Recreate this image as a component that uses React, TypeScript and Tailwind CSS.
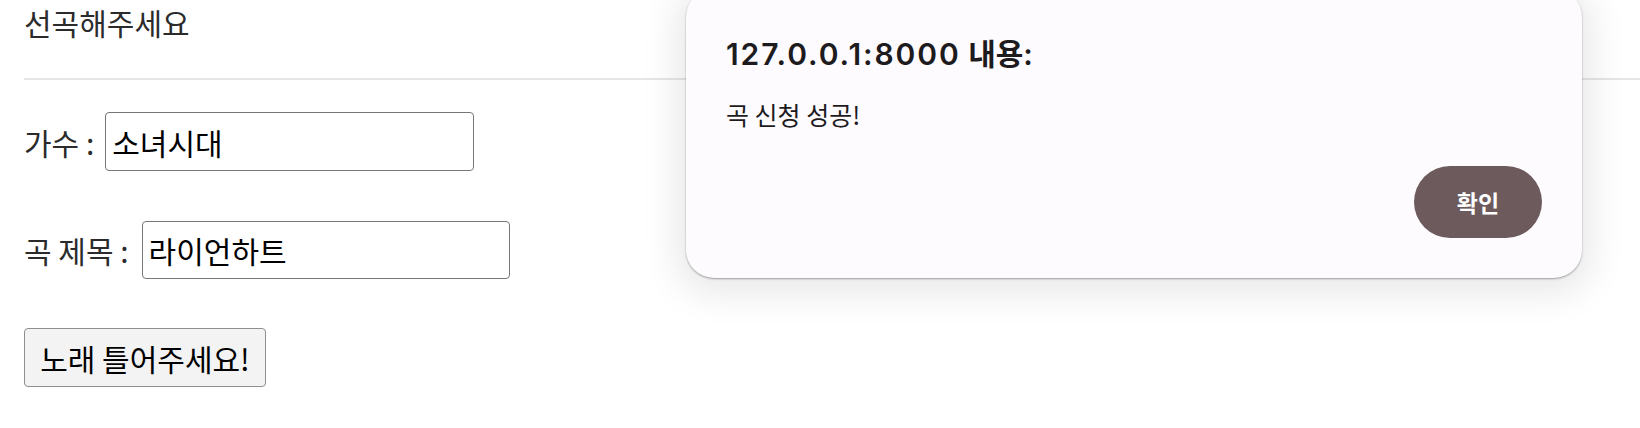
import React from "react";

export default function App() {
  return (
    <div className="relative h-[428px] w-[1640px] overflow-hidden bg-white font-['Noto_Sans_CJK_KR',sans-serif] text-[30px] text-[#2b2b2b]">
      <div className="pl-6">
        <div className="h-[78px] pt-[2px] leading-[40px]">선곡해주세요</div>
        <div className="h-[2px] bg-[#e6e6e6]" />
        <div className="mt-[32px] flex h-[59px] items-center">
          <span className="leading-[40px]">가수 :</span>
          <input
            readOnly
            value="소녀시대"
            className="ml-[11px] h-[59px] w-[369px] rounded-[4px] border-[1.5px] border-[#767676] bg-white px-[6px] font-['Noto_Sans_CJK_KR',sans-serif] text-[30px] text-black outline-none"
          />
        </div>
        <div className="mt-[50px] flex h-[58px] items-center">
          <span className="leading-[40px]">곡 제목 :</span>
          <input
            readOnly
            value="라이언하트"
            className="ml-[13px] h-[58px] w-[368px] rounded-[4px] border-[1.5px] border-[#767676] bg-white px-[6px] font-['Noto_Sans_CJK_KR',sans-serif] text-[30px] text-black outline-none"
          />
        </div>
        <div className="mt-[49px]">
          <button className="flex h-[59px] w-[242px] items-center justify-center rounded-[4px] border-[1.5px] border-[#8f8f8f] bg-[#f3f3f3] font-['Noto_Sans_CJK_KR',sans-serif] text-[30px] leading-[40px] text-black">
            노래 틀어주세요!
          </button>
        </div>
      </div>

      <div className="absolute left-[686px] top-[-11px] flex h-[289px] w-[896px] flex-col rounded-[28px] bg-[#fdfbfe] px-[40px] pt-[45px] shadow-[0_1px_2px_rgba(0,0,0,0.35),0_6px_36px_10px_rgba(0,0,0,0.09)] font-['Inter','Noto_Sans_CJK_KR',sans-serif]">
        <div className="h-[40px] text-[30px] font-semibold leading-[40px] text-[#1d1b1e]">
          <span className="tracking-[1.9px]">127.0.0.1:8000</span> 내용:
        </div>
        <div className="mt-[24px] h-[32px] font-['Noto_Sans_CJK_KR',sans-serif] text-[25px] leading-[32px] text-[#1d1b1e]">
          곡 신청 성공!
        </div>
        <div className="mt-[36px] flex justify-end">
          <button className="flex h-[72px] w-[128px] items-center justify-center rounded-full bg-[#6d5a5d] font-['Noto_Sans_CJK_KR',sans-serif] text-[23px] font-bold text-white">
            확인
          </button>
        </div>
      </div>
    </div>
  );
}
